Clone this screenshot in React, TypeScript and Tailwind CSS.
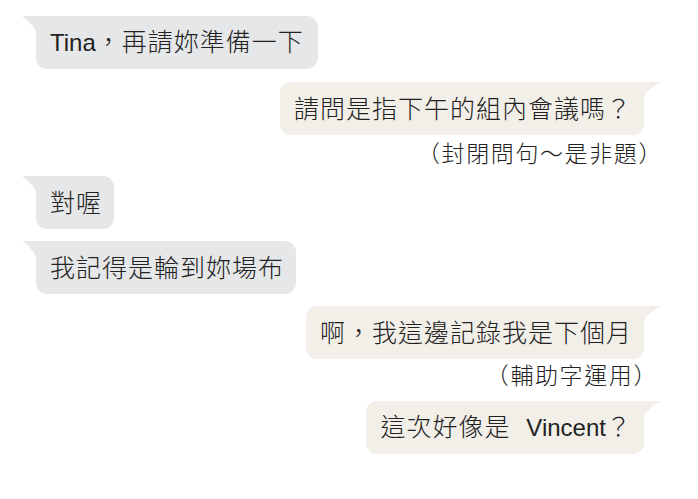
import React from "react";

const LEFT_BG = "#e6e7e9";
const RIGHT_BG = "#f2efe9";

function Rich({ text }: { text: string }) {
  const parts = text.split(/([A-Za-z]+)/);
  return (
    <>
      {parts.map((p, i) =>
        /^[A-Za-z]+$/.test(p) ? (
          <span key={i} className="tracking-normal text-[24px]">
            {p}
          </span>
        ) : (
          <span key={i}>{p}</span>
        )
      )}
    </>
  );
}

function LeftTail() {
  return (
    <svg
      className="absolute left-[-14px] top-0"
      width="26"
      height="20"
      viewBox="0 0 26 20"
    >
      <path d="M0 0 L26 0 L26 20 L14 20 L14 15 Q8 5 0 0 Z" fill={LEFT_BG} />
    </svg>
  );
}

function RightTail() {
  return (
    <svg
      className="absolute right-[-17px] top-0"
      width="29"
      height="20"
      viewBox="0 0 29 20"
    >
      <path d="M29 0 L0 0 L0 20 L12 20 L12 14 Q19 5 29 0 Z" fill={RIGHT_BG} />
    </svg>
  );
}

function Bubble({
  side,
  text,
  extra = "",
}: {
  side: "left" | "right";
  text: string;
  extra?: string;
}) {
  const isLeft = side === "left";
  return (
    <div
      className={
        "relative h-[53px] flex items-center rounded-[11px] pl-[14px] pr-[12px] text-[25px] font-light leading-[26px] tracking-[1px] whitespace-nowrap " +
        (isLeft ? "self-start ml-[36px] bg-[#e6e7e9] " : "self-end mr-[54px] bg-[#f2efe9] ") +
        extra
      }
    >
      {isLeft ? <LeftTail /> : <RightTail />}
      <span className="relative">
        <Rich text={text} />
      </span>
    </div>
  );
}

function Caption({ text, extra = "" }: { text: string; extra?: string }) {
  return (
    <div
      className={
        "self-end h-[26px] leading-[26px] text-[23px] font-light tracking-[1.6px] whitespace-nowrap " +
        extra
      }
    >
      {text}
    </div>
  );
}

export default function App() {
  return (
    <div
      className="w-[698px] h-[499px] bg-white flex flex-col pt-[16px] text-[#222222] overflow-hidden"
      style={{
        fontFamily:
          '"Liberation Sans", "Noto Sans CJK TC", "Noto Sans CJK SC", sans-serif',
      }}
    >
      <Bubble side="left" text="Tina，再請妳準備一下" extra="pr-[14px]" />
      <Bubble side="right" text="請問是指下午的組內會議嗎？" extra="mt-[13px]" />
      <Caption text="（封閉問句～是非題）" extra="mt-[6px] mr-[35px]" />
      <Bubble side="left" text="對喔" extra="mt-[9px]" />
      <Bubble side="left" text="我記得是輪到妳場布" extra="mt-[12px]" />
      <Bubble side="right" text="啊，我這邊記錄我是下個月" extra="mt-[12px]" />
      <Caption text="（輔助字運用）" extra="mt-[4px] mr-[40px]" />
      <Bubble
        side="right"
        text="這次好像是 Vincent？"
        extra="mt-[12px] [word-spacing:8px]"
      />
    </div>
  );
}
